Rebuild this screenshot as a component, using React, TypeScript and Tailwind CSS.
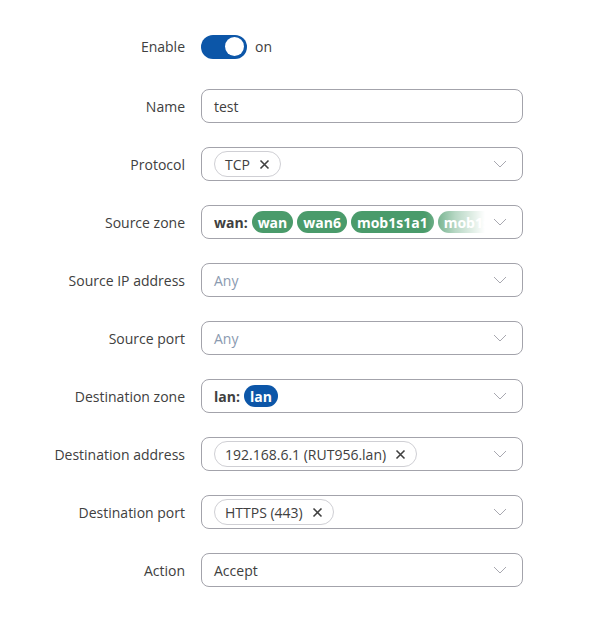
import { ReactNode } from 'react'

const Chevron = () => (
  <svg width="14" height="8" viewBox="0 0 14 8" className="shrink-0 ml-2">
    <path d="M1 1l6 6 6-6" fill="none" stroke="#a8a8b0" strokeWidth="1" />
  </svg>
)

const X = () => (
  <svg width="11" height="11" viewBox="0 0 11 11" className="ml-[9px]">
    <path d="M1.5 1.5l8 8M9.5 1.5l-8 8" stroke="#404040" strokeWidth="1.6" />
  </svg>
)

function Field({ children, select = true }: { children: ReactNode; select?: boolean }) {
  return (
    <div className="h-[34px] w-[322px] rounded-[8px] border border-[#a3a3ab] bg-white flex items-center pl-3 pr-[15px]">
      <div className="flex-1 min-w-0 flex items-center">{children}</div>
      {select && <Chevron />}
    </div>
  )
}

function Tag({ text }: { text: string }) {
  return (
    <span className="inline-flex items-center h-[26px] rounded-full border border-[#cfcfd4] px-[10px] text-[14px] text-[#404040] whitespace-nowrap">
      {text}
      <X />
    </span>
  )
}

function Pill({ text, color }: { text: string; color: string }) {
  return (
    <span
      className={`inline-flex items-center h-[22px] rounded-full px-[6px] text-[14px] font-bold text-white whitespace-nowrap ${color}`}
    >
      {text}
    </span>
  )
}

const rows: { label: string; field: ReactNode }[] = [
  {
    label: 'Name',
    field: (
      <Field select={false}>
        <span className="text-[14px] text-[#404040]">test</span>
      </Field>
    ),
  },
  {
    label: 'Protocol',
    field: (
      <Field>
        <Tag text="TCP" />
      </Field>
    ),
  },
  {
    label: 'Source zone',
    field: (
      <Field>
        <div className="relative flex items-center gap-1 overflow-hidden w-full">
          <span className="text-[14px] font-bold text-[#404040]">wan:</span>
          <Pill text="wan" color="bg-[#4a9b6b]" />
          <Pill text="wan6" color="bg-[#4a9b6b]" />
          <Pill text="mob1s1a1" color="bg-[#4a9b6b]" />
          <Pill text="mob1s1a2" color="bg-[#4a9b6b]" />
          <div className="absolute right-0 top-0 bottom-0 w-[60px] bg-gradient-to-r from-white/0 via-white/60 to-white" />
        </div>
      </Field>
    ),
  },
  {
    label: 'Source IP address',
    field: (
      <Field>
        <span className="text-[14px] text-[#8a9ab0]">Any</span>
      </Field>
    ),
  },
  {
    label: 'Source port',
    field: (
      <Field>
        <span className="text-[14px] text-[#8a9ab0]">Any</span>
      </Field>
    ),
  },
  {
    label: 'Destination zone',
    field: (
      <Field>
        <span className="text-[14px] font-bold text-[#404040] mr-1">lan:</span>
        <Pill text="lan" color="bg-[#0c56a8]" />
      </Field>
    ),
  },
  {
    label: 'Destination address',
    field: (
      <Field>
        <Tag text="192.168.6.1 (RUT956.lan)" />
      </Field>
    ),
  },
  {
    label: 'Destination port',
    field: (
      <Field>
        <Tag text="HTTPS (443)" />
      </Field>
    ),
  },
  {
    label: 'Action',
    field: (
      <Field>
        <span className="text-[14px] text-[#404040]">Accept</span>
      </Field>
    ),
  },
]

export default function App() {
  return (
    <div className="w-[591px] h-[620px] bg-white pt-[28px] font-['Open_Sans',sans-serif]">
      <div className="grid grid-cols-[185px_322px] gap-x-4 gap-y-6 items-center">
        <div className="text-right text-[14px] text-[#404040]">Enable</div>
        <div className="h-[37px] flex items-center">
          <div className="w-[46px] h-[24px] rounded-full bg-[#0c56a8] flex items-center justify-end pr-[3px]">
            <div className="w-[19px] h-[19px] rounded-full bg-white" />
          </div>
          <span className="ml-2 text-[14px] text-[#404040]">on</span>
        </div>
        {rows.map(r => (
          <div key={r.label} className="contents">
            <div className="text-right text-[14px] text-[#404040]">{r.label}</div>
            {r.field}
          </div>
        ))}
      </div>
    </div>
  )
}
